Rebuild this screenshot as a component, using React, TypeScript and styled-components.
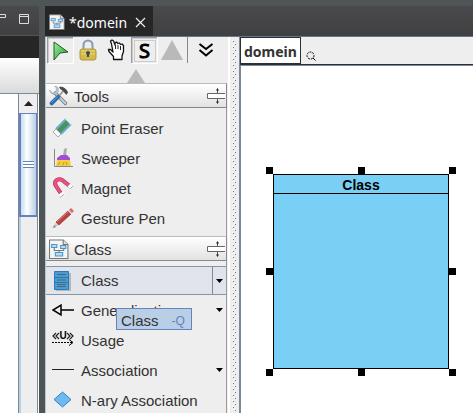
import React from "react";
import styled, { createGlobalStyle, css } from "styled-components";

const GlobalStyle = createGlobalStyle`
  *, *::before, *::after { box-sizing: border-box; }
  body { margin: 0; font-family: "Liberation Sans", Arial, sans-serif; font-size: 15px; color: #333; }
  button { font: inherit; color: inherit; margin: 0; padding: 0; border: 0; background: none; text-align: left; }
  svg { display: block; flex: none; }
`;

const Window = styled.div`
  display: flex;
  height: 100vh;
  overflow: hidden;
  padding-top: 6px;
  background: #4f5557;
`;

const SidePane = styled.aside`
  flex: 0 0 39px;
  min-width: 0;
  display: flex;
  flex-direction: column;
  margin-right: 6px;
`;

const PaneHeader = styled.div`
  flex: 0 0 30px;
  display: flex;
  gap: 13px;
  align-items: center;
  justify-content: flex-end;
  padding: 0 10px 4px 0;
  border-bottom: 1px solid #555;
  background: linear-gradient(#4a4a4d, #404042);
`;

const DarkStrip = styled.div`
  flex: 0 0 22px;
  background: #262626;
`;

const LightStrip = styled.div`
  flex: 0 0 36px;
  border-bottom: 1px solid #7a8a99;
  background: linear-gradient(#fff, #dadada);
`;

const SideBody = styled.div`
  flex: 1;
  display: flex;
  background: #fff;
`;

const ScrollBar = styled.div`
  width: 20px;
  margin: 0 1px 0 auto;
  display: flex;
  flex-direction: column;
  border: solid #7a8a99;
  border-width: 0 1px;
  background: linear-gradient(90deg, #b8cfe5 0 2px, #eee 2px);
`;

const ScrollUp = styled.button`
  flex: 0 0 19px;
  display: grid;
  place-items: center;
  background: #eee;
`;

const Thumb = styled.div`
  flex: 0 0 104px;
  display: grid;
  place-items: center;
  border: 1px solid #6382bf;
  border-left-width: 2px;
  border-bottom-width: 2px;
  background: linear-gradient(90deg, #c8dcf3, #fff 40%, #b8cfe5);
`;

const Grip = styled.span`
  width: 11px;
  height: 7px;
  background: repeating-linear-gradient(#6382bf 0 1px, #fff 1px 3px);
`;

const Main = styled.main`
  flex: 1;
  min-width: 0;
  display: flex;
  flex-direction: column;
`;

const TabBar = styled.div`
  flex: 0 0 31px;
  display: flex;
  border-bottom: 1px solid #63788e;
  background: linear-gradient(#4a4a4d, #404042);
`;

const Tab = styled.div`
  display: flex;
  align-items: center;
  gap: 4px;
  padding: 2px 7px 0 4px;
  background: #262626;
  color: #fff;
  font-family: "Noto Sans", sans-serif;
  font-size: 14px;
`;

const TabClose = styled.button`
  margin-left: 4px;
`;

const Workspace = styled.div`
  flex: 1;
  min-height: 0;
  display: flex;
  background: #eee;
`;

const Palette = styled.section`
  flex: 0 0 182px;
  display: flex;
  flex-direction: column;
  border-left: 1px solid #b8c4cf;
`;

const ToolBar = styled.div`
  flex: 0 0 32px;
  display: flex;
  align-items: center;
  padding: 0 0 6px 1px;
`;

const ToolButton = styled.button<{ $pressed?: boolean }>`
  width: 26px;
  height: 26px;
  margin-right: 2px;
  display: grid;
  place-items: center;
  ${(p) =>
    p.$pressed &&
    css`
      border: solid #999;
      border-width: 1px 0 0 1px;
      box-shadow: inset 1px 1px #ccc, 1px 1px #fff;
    `}
`;

const BarRule = styled.span`
  width: 1px;
  height: 26px;
  background: #888;
`;

const Overflow = styled.button`
  flex: 1;
  padding-right: 4px;
  display: grid;
  place-items: center;
`;

const ScrollHint = styled.div`
  flex: 0 0 14px;
  padding-left: 81px;
`;

const SectionHeader = styled.button`
  flex: 0 0 25px;
  width: 100%;
  display: flex;
  align-items: center;
  gap: 5px;
  padding: 1px 1px 0 3px;
  border: solid #888;
  border-width: 1px 1px 1px 0;
  border-top-color: #bbb;
  background: linear-gradient(#fff, #e2e2e2);
`;

const Spacer = styled.span`
  flex: 1;
`;

const Items = styled.div<{ $closed?: boolean }>`
  padding: 5px 0 ${(p) => (p.$closed ? 3 : 0)}px;
  border-right: 1px solid #999;
`;

const Row = styled.div<{ $selected?: boolean }>`
  position: relative;
  height: ${(p) => (p.$selected ? 29 : 30)}px;
  display: flex;
  ${(p) =>
    p.$selected &&
    css`
      border: solid #8496a8;
      border-width: 1px 0;
      background: #e1e5eb;
    `}
`;

const RowButton = styled.button`
  flex: 1;
  min-width: 0;
  display: flex;
  align-items: center;
  gap: 7px;
  padding-left: 6px;
  white-space: nowrap;
`;

const RowMenu = styled.button<{ $ruled?: boolean }>`
  width: 14px;
  display: grid;
  place-items: center;
  border-left: 1px solid ${(p) => (p.$ruled ? "#7a8a99" : "transparent")};
`;

const Tip = styled.div`
  position: absolute;
  z-index: 2;
  left: 70px;
  top: 13px;
  height: 22px;
  display: flex;
  align-items: center;
  gap: 13px;
  padding: 3px 6px 0 4px;
  border: 1px solid #6382bf;
  background: #b8cfe5;
`;

const Shortcut = styled.span`
  font-size: 12px;
  color: #6382bf;
`;

const Splitter = styled.div`
  flex: 0 0 12px;
  background:
    repeating-linear-gradient(#777 0 1px, transparent 1px 6px) 6px 4px / 1px 100% no-repeat,
    repeating-linear-gradient(#777 0 1px, transparent 1px 6px) 8px 7px / 1px 100% no-repeat,
    repeating-linear-gradient(#fff 0 1px, transparent 1px 6px) 5px 3px / 1px 100% no-repeat,
    repeating-linear-gradient(#fff 0 1px, transparent 1px 6px) 7px 6px / 1px 100% no-repeat,
    linear-gradient(#fff, #fff) 1px 0 / 2px 100% no-repeat,
    #eee;
`;

const Editor = styled.section`
  flex: 1;
  min-width: 0;
  display: flex;
  flex-direction: column;
  border-left: 1px solid #7a8a99;
`;

const Crumbs = styled.nav`
  flex: 0 0 28px;
  display: flex;
  align-items: flex-start;
  border-bottom: 1px solid #2c3036;
`;

const Crumb = styled.button`
  height: 27px;
  padding: 2px 3px 0;
  border: 1px solid #2c3036;
  background: #fff;
  color: #333;
  font: bold 14px "Noto Sans", sans-serif;
`;

const Lens = styled.span`
  padding: 14px 0 0 5px;
`;

const Canvas = styled.div`
  flex: 1;
  position: relative;
  overflow: hidden;
  border: solid #7a8a99;
  border-width: 1px 0 0 1px;
  background: #fff;
`;

const ClassNode = styled.article`
  position: absolute;
  left: 32px;
  top: 108px;
  width: 176px;
  height: 195px;
  border: 1px solid #000;
  background: #7acff5;
`;

const ClassName = styled.h2`
  height: 19px;
  margin: 0;
  padding-top: 2px;
  border-bottom: 1px solid #000;
  font-size: 14px;
  line-height: 17px;
  text-align: center;
  color: #000;
`;

const Handles = styled.div`
  position: absolute;
  inset: -8px;
  display: grid;
  grid-template-columns: repeat(3, 7px);
  grid-template-rows: repeat(3, 7px);
  justify-content: space-between;
  align-content: space-between;
`;

const Handle = styled.span<{ $hidden?: boolean }>`
  background: ${(p) => (p.$hidden ? "none" : "#000")};
`;

const DiagramIcon = ({ size = 20 }: { size?: number }) => (
  <svg width={size} height={size} viewBox="1 0 19 20" preserveAspectRatio="none" fill="none">
    <path d="M1.500 1h13l4.500 4.500v14H1.500z" fill="#f5f5f4" stroke="#777" />
    <path d="M14.500 1v4.500H19" fill="#ddd" stroke="#777" />
    <path d="M6 9v2.500h9V9M10.500 11.500v2" stroke="#777" />
    <g fill="#b7ddf5" stroke="#4b94cb">
      <path d="M3.500 5.500h5v3h-5zM12 6.500h5v3h-5zM7 13.500h7v3.500H7z" />
    </g>
  </svg>
);

const CursorIcon = () => (
  <svg width="18" height="22" viewBox="0 0 18 22">
    <defs>
      <linearGradient id="green" x2="1" y2="1">
        <stop stopColor="#a4eda0" />
        <stop offset="1" stopColor="#129c24" />
      </linearGradient>
    </defs>
    <path d="M2 2l14 10-8 1-6 7z" fill="url(#green)" stroke="#28562d" />
  </svg>
);

const LockIcon = () => (
  <svg width="18" height="22" viewBox="0 0 18 22">
    <path d="M4.500 11V6a4.500 4.500 0 0 1 9 0v5" fill="none" stroke="#8797b5" strokeWidth="2" />
    <rect x="1" y="10" width="16" height="11" rx="2" fill="#d3b84a" stroke="#b49a38" />
    <path d="M2 12h14M2 15h14" stroke="#ecd980" />
    <circle cx="9" cy="14" r="2" fill="#414653" />
    <path d="M9 14v4" stroke="#414653" strokeWidth="2" />
  </svg>
);

const HandIcon = () => (
  <svg width="18" height="22" viewBox="0 0 18 22">
    <path
      d="M6.500 20.500v-3L2 12.500 1.500 10.500h2L6 13 4.500 5 3.500 2 5 1l1.500 1L8 6V4l1.500-1L11 4.500l1.500-.5 1 1.500 1.500-.5 1.500 1.500v6L15 17v3.500z"
      fill="#fff" stroke="#111" strokeWidth="1.300" strokeLinejoin="round"
    />
    <path d="M8.500 6v4M11 6v4M13.500 7v4" stroke="#222" />
  </svg>
);

const SnapFrame = styled.span`
  width: 22px;
  height: 22px;
  border: 1px solid #ccc;
  color: #000;
  font: 20px/20px "Noto Sans", sans-serif;
  text-align: center;
  -webkit-text-stroke: 1px #000;
`;

const Triangle = ({ size, height }: { size: number; height: number }) => (
  <svg width={size} height={height} viewBox="0 0 22 20" preserveAspectRatio="none">
    <path d="M11 0l11 20H0z" fill="#b9b9b9" />
  </svg>
);

const ChevronsIcon = () => (
  <svg width="16" height="16" viewBox="0 0 16 16" fill="none" stroke="#000" strokeWidth="2">
    <path d="M1.500 2l6.500 5 6.500-5M1.500 8l6.500 5.500L14.500 8" />
  </svg>
);

const SplitIcon = () => (
  <svg width="18" height="18" viewBox="0 0 18 18" fill="none" stroke="#555">
    <path d="M18 6.500H.500v5H18" stroke="#666" fill="#fff" />
    <path d="M10.500 2v4M10.500 12v4" />
    <path d="M9 3.500h3L10.500 1zM9 14.500h3L10.500 17z" fill="#222" stroke="none" />
  </svg>
);

const ToolsIcon = () => (
  <svg width="20" height="20" viewBox="0 0 22 22" fill="none" strokeLinecap="round">
    <path d="M7 8l11 11" stroke="#66727a" strokeWidth="4" />
    <path d="M7 8l11 11" stroke="#c3ccd2" strokeWidth="2.500" />
    <path d="M1 5l3 3 4-2V2L6 0c4 0 5 4 4 7-3 4-9 2-9-2z" fill="#c5cdd3" stroke="#818b91" strokeWidth=".6" />
    <path d="M11 11l5-6" stroke="#999" strokeWidth="2" />
    <path d="M10 12l-7 7" stroke="#326daa" strokeWidth="4.500" />
    <path d="M9 12l-6 6" stroke="#69a5da" />
    <path d="M11 1c5-1 8 2 10 6l-2 3-3-4-4-3z" fill="#454b4f" />
  </svg>
);

const EraserIcon = () => (
  <svg width="22" height="22" viewBox="0 0 22 22">
    <path d="M3 13L14 2l5 5L8 18z" fill="#51925a" />
    <path d="M4 12L14 2M9 17L19 7" fill="none" stroke="#62afd8" strokeWidth="2" />
    <path d="M1 15l3-3 5 5-3 3z" fill="#f7f7f7" stroke="#aaa" />
    <path d="M13 2l2-1 5 4-1 3z" fill="#e5eef2" />
  </svg>
);

const SweeperIcon = () => (
  <svg width="22" height="22" viewBox="0 0 22 22">
    <path d="M2.500 2v17.500H21" fill="none" stroke="#888" />
    <path d="M12 2l3-1-1 8h-3z" fill="#aaa" />
    <path d="M5 11l4-3h6l3 3v3H5z" fill="#a34ed0" />
    <path d="M5 13h13l1 6H4z" fill="#f4cd45" />
    <path d="M6 18l2-3M11 18l1-3M15 18l-1-3" stroke="#c9931e" />
  </svg>
);

const MagnetIcon = () => (
  <svg width="22" height="22" viewBox="0 0 22 22" fill="none">
    <path d="M10 18L4 9C1 4 6 1 10 3l9 7" stroke="#ad244b" strokeWidth="4" />
    <path d="M10 18L4 9C1 4 6 1 10 3l9 7" stroke="#ed4f7e" strokeWidth="3" />
    <path d="M8 19l4-3M17 11l3-3" stroke="#fff" strokeWidth="4" />
    <path d="M8 20.500l4-3M18 12l3-3" stroke="#aaa" />
  </svg>
);

const PenIcon = () => (
  <svg width="22" height="22" viewBox="0 0 22 22">
    <path d="M1 21l3-6 3 3z" fill="#eac1a0" />
    <path d="M1 21l1-3 2 2z" fill="#4d92c7" />
    <path d="M4 15L16 4l3 3L7 18z" fill="#bb423e" stroke="#752f2d" strokeWidth=".6" />
    <path d="M5 15L16 5" stroke="#e87b6d" />
    <path d="M16 4l1-1 3 3-1 1z" fill="#ddd" />
    <path d="M17 3l2-2 3 3-2 2z" fill="#dc6771" />
  </svg>
);

const ClassIcon = () => (
  <svg width="22" height="22" viewBox="0 0 22 22" fill="none">
    <path d="M4 20h14V3" stroke="#b5b8bb" strokeWidth="2" />
    <path d="M2.500 1.500h14v18h-14z" fill="#4c9bd2" stroke="#287bb9" />
    <path d="M3 7.500h13M3 12.500h13" stroke="#2677ae" />
    <path d="M5 4.500h9M5 10h9M5 14.500h9M5 16.500h9" stroke="#46677d" />
  </svg>
);

const GeneralizationIcon = () => (
  <svg width="22" height="22" viewBox="0 0 22 22" fill="none" stroke="#000" strokeWidth="1.500">
    <path d="M22 11H9M9 6v10L1 11z" />
  </svg>
);

const UsageIcon = () => (
  <svg width="22" height="22" viewBox="0 0 22 22" fill="none" stroke="#222">
    <path d="M4 4L1 7l3 3M7 4L4 7l3 3M15 4l3 3-3 3M18 4l3 3-3 3" strokeWidth="1.200" />
    <text x="11" y="10" textAnchor="middle" fontSize="10" fontWeight="bold" fontFamily="Liberation Sans, sans-serif" fill="#000" stroke="none">U</text>
    <path d="M0 13.500h21" strokeDasharray="2 1" stroke="#000" />
    <path d="M17 10.500l4 3-4 3" stroke="#000" />
  </svg>
);

const AssociationIcon = () => (
  <svg width="22" height="22" viewBox="0 0 22 22">
    <path d="M0 10.500h22" stroke="#222" />
  </svg>
);

const NaryIcon = () => (
  <svg width="22" height="22" viewBox="0 0 22 22">
    <path d="M10.500 3l8.500 7.500-8.500 7.500L2 10.500z" fill="#70b9ef" stroke="#2e86c7" />
  </svg>
);

const Caret = () => (
  <svg width="7" height="4" viewBox="0 0 7 4">
    <path d="M0 0h7L3.500 4z" fill="#000" />
  </svg>
);

const tools = [
  { label: "Point Eraser", Icon: EraserIcon },
  { label: "Sweeper", Icon: SweeperIcon },
  { label: "Magnet", Icon: MagnetIcon },
  { label: "Gesture Pen", Icon: PenIcon },
];

const shapes = [
  { label: "Class", Icon: ClassIcon, selected: true, menu: true },
  { label: "Generalization", Icon: GeneralizationIcon, menu: true, tip: true },
  { label: "Usage", Icon: UsageIcon },
  { label: "Association", Icon: AssociationIcon, menu: true },
  { label: "N-ary Association", Icon: NaryIcon },
];

export default function App() {
  return (
    <>
      <GlobalStyle />
      <Window>
        <SidePane>
          <PaneHeader>
            <svg width="6" height="12" viewBox="5 0 6 12" fill="none" stroke="#ddd">
              <path d="M.500 1.500h10v3H.500z" />
            </svg>
            <svg width="10" height="10" viewBox="0 0 10 10" fill="none" stroke="#ddd">
              <path d="M.500.500h9v9h-9zM0 2.500h10" />
            </svg>
          </PaneHeader>
          <DarkStrip />
          <LightStrip />
          <SideBody>
            <ScrollBar>
              <ScrollUp aria-label="Scroll up">
                <svg width="9" height="5" viewBox="0 0 9 5"><path d="M4.500 0L9 5H0z" fill="#222" /></svg>
              </ScrollUp>
              <Thumb><Grip /></Thumb>
            </ScrollBar>
          </SideBody>
        </SidePane>
        <Main>
          <TabBar>
            <Tab>
              <DiagramIcon size={16} />
              <span>*domein</span>
              <TabClose aria-label="Close tab">
                <svg width="11" height="11" viewBox="0 0 11 11" stroke="#eee" strokeWidth="1.200">
                  <path d="M1 1l9 9M10 1l-9 9" />
                </svg>
              </TabClose>
            </Tab>
          </TabBar>
          <Workspace>
            <Palette>
              <ToolBar>
                <ToolButton $pressed aria-label="Select"><CursorIcon /></ToolButton>
                <ToolButton aria-label="Lock"><LockIcon /></ToolButton>
                <ToolButton aria-label="Pan"><HandIcon /></ToolButton>
                <ToolButton $pressed aria-label="Snap"><SnapFrame>S</SnapFrame></ToolButton>
                <ToolButton aria-label="Shape"><Triangle size={22} height={20} /></ToolButton>
                <BarRule />
                <Overflow aria-label="More tools"><ChevronsIcon /></Overflow>
              </ToolBar>
              <ScrollHint><Triangle size={18} height={14} /></ScrollHint>
              <SectionHeader>
                <ToolsIcon />
                <span>Tools</span>
                <Spacer />
                <SplitIcon />
              </SectionHeader>
              <Items $closed>
                {tools.map(({ label, Icon }) => (
                  <Row key={label}>
                    <RowButton><Icon />{label}</RowButton>
                  </Row>
                ))}
              </Items>
              <SectionHeader>
                <DiagramIcon />
                <span>Class</span>
                <Spacer />
                <SplitIcon />
              </SectionHeader>
              <Items>
                {shapes.map(({ label, Icon, selected, menu, tip }) => (
                  <Row key={label} $selected={selected}>
                    <RowButton><Icon />{label}</RowButton>
                    {menu && <RowMenu $ruled={selected} aria-label={`${label} options`}><Caret /></RowMenu>}
                    {tip && <Tip role="tooltip">Class <Shortcut>-Q</Shortcut></Tip>}
                  </Row>
                ))}
              </Items>
            </Palette>
            <Splitter />
            <Editor>
              <Crumbs>
                <Crumb>domein</Crumb>
                <Lens>
                  <svg width="10" height="10" viewBox="0 0 10 10" fill="none" stroke="#000">
                    <circle cx="4.500" cy="4.500" r="3.500" strokeDasharray="2 1" />
                    <path d="M7 7L9.500 9.500" />
                  </svg>
                </Lens>
              </Crumbs>
              <Canvas>
                <ClassNode>
                  <ClassName>Class</ClassName>
                  <Handles>
                    {Array.from({ length: 9 }, (_, i) => <Handle key={i} $hidden={i === 4} />)}
                  </Handles>
                </ClassNode>
              </Canvas>
            </Editor>
          </Workspace>
        </Main>
      </Window>
    </>
  );
}
